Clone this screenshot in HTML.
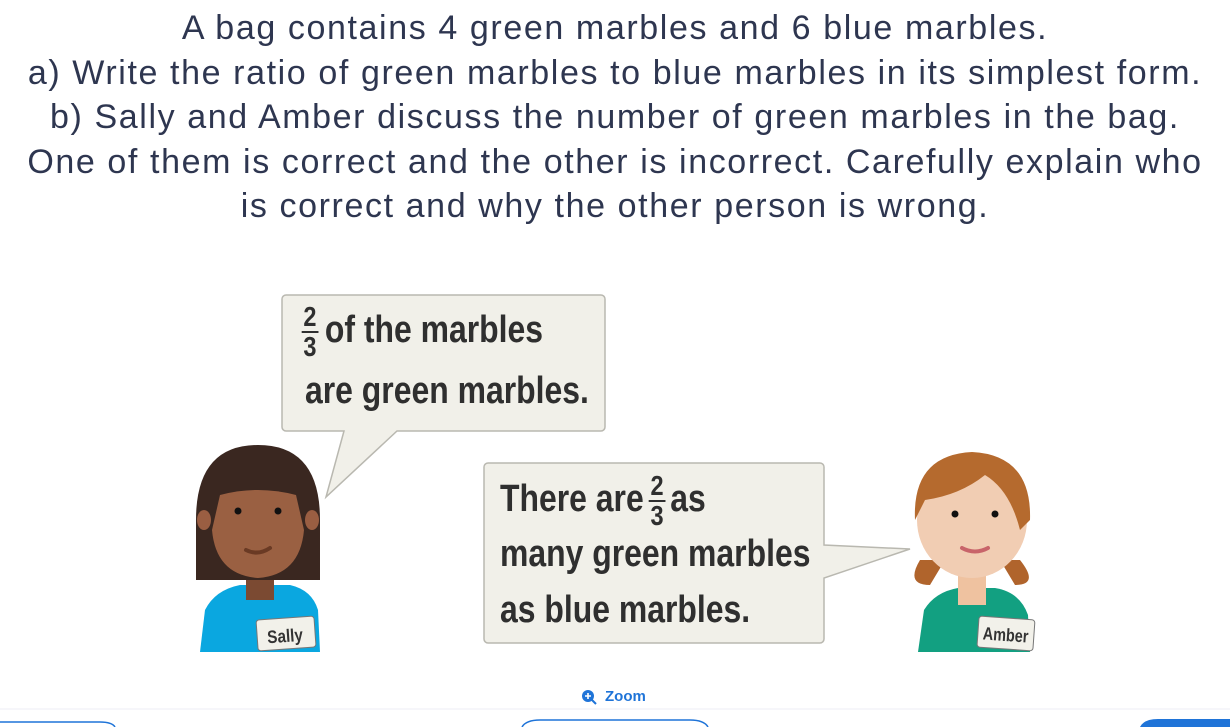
<!DOCTYPE html>
<html><head><meta charset="utf-8"><style>
body{margin:0;width:1230px;height:727px;background:#fff;overflow:hidden;position:relative;font-family:"Liberation Sans",sans-serif}
.q{position:absolute;top:6px;left:0;width:1230px;text-align:center;color:#2e3650;font-size:34px;letter-spacing:1.6px;line-height:44.5px}
.b{position:absolute;font-family:"Liberation Sans",sans-serif;font-weight:bold;color:#2f2f2f;font-size:38px;white-space:nowrap;transform:scaleX(0.84);transform-origin:0 50%}
.fr{display:inline-block;vertical-align:middle;text-align:center;font-size:28px;line-height:28px;margin:0 8px 0 2px}
.fr span{display:block}
.fr .n{border-bottom:2px solid #2f2f2f;padding:0 2px}
</style></head><body>
<div class="q">A bag contains 4 green marbles and 6 blue marbles.<br>a) Write the ratio of green marbles to blue marbles in its simplest form.<br>b) Sally and Amber discuss the number of green marbles in the bag.<br>One of them is correct and the other is incorrect. Carefully explain who<br>is correct and why the other person is wrong.</div>
<svg width="1230" height="727" style="position:absolute;left:0;top:0">
<path d="M286 295H601a4 4 0 0 1 4 4V427a4 4 0 0 1-4 4H397L326 497L344 431H286a4 4 0 0 1-4-4V299a4 4 0 0 1 4-4Z" fill="#f1f0e9" stroke="#b9b8b0" stroke-width="1.5"/>
<path d="M488 463H820a4 4 0 0 1 4 4V545L910 549L824 578V639a4 4 0 0 1-4 4H488a4 4 0 0 1-4-4V467a4 4 0 0 1 4-4Z" fill="#f1f0e9" stroke="#b9b8b0" stroke-width="1.5"/>
<path d="M200 652L205 610Q215 590 240 585H290Q312 590 318 610L320 652Z" fill="#0aa7e0"/>
<rect x="246" y="560" width="28" height="40" fill="#7b4a32"/>
<path d="M196 520Q196 445 258 445Q320 445 320 520V580H196Z" fill="#3a2720"/>
<ellipse cx="204" cy="520" rx="7" ry="10" fill="#9a5e42"/>
<ellipse cx="312" cy="520" rx="7" ry="10" fill="#9a5e42"/>
<path d="M220 495Q258 485 296 495L304 530Q300 575 258 578Q216 575 212 530Z" fill="#9a6042"/>
<circle cx="238" cy="511" r="3.5" fill="#111"/><circle cx="278" cy="511" r="3.5" fill="#111"/>
<path d="M246 550Q258 556 270 548" stroke="#6a3a24" stroke-width="4" fill="none" stroke-linecap="round"/>
<rect x="257" y="618" width="58" height="31" rx="3" fill="#f2f1ea" stroke="#777" transform="rotate(-4 286 633)"/>
<text x="267" y="642" font-family="Liberation Sans,sans-serif" font-weight="bold" font-size="18" fill="#333" transform="rotate(-4 286 633) translate(267 0) scale(0.85 1) translate(-267 0)">Sally</text>
<path d="M918 652L924 610Q935 592 958 588H995Q1020 592 1028 615L1030 652Z" fill="#12a081"/>
<rect x="958" y="570" width="28" height="35" fill="#efc2a0"/>
<path d="M920 560Q905 585 930 585L945 560Z M1020 560Q1040 585 1015 585L1000 560Z" fill="#b0642c"/>
<ellipse cx="972" cy="520" rx="55" ry="58" fill="#f1cdb3"/>
<path d="M915 520Q912 455 972 452Q1032 455 1030 520L1020 530Q1010 490 985 475Q960 495 925 500Z" fill="#b56a2e"/>
<circle cx="955" cy="514" r="3.5" fill="#111"/><circle cx="995" cy="514" r="3.5" fill="#111"/>
<path d="M962 548Q975 555 988 548" stroke="#c8646a" stroke-width="4" fill="none" stroke-linecap="round"/>
<rect x="978" y="618" width="56" height="31" rx="3" fill="#f2f1ea" stroke="#777" transform="rotate(4 1006 633)"/>
<text x="983" y="641" font-family="Liberation Sans,sans-serif" font-weight="bold" font-size="18" fill="#333" transform="rotate(4 1006 633) translate(983 0) scale(0.8 1) translate(-983 0)">Amber</text>
<circle cx="588" cy="696" r="6" fill="#1f74d8"/><path d="M585 696h6M588 693v6" stroke="#fff" stroke-width="1.6"/><path d="M592 700l4 4" stroke="#1f74d8" stroke-width="2"/>
<line x1="0" y1="709" x2="1230" y2="709" stroke="#eeeef5"/>
<path d="M0 722H100Q112 722 115 727" stroke="#1f74d8" fill="none" stroke-width="1.5"/>
<path d="M522 727Q526 720 540 720H690Q704 720 708 727" stroke="#1f74d8" fill="none" stroke-width="1.5"/>
<path d="M1140 727Q1144 719 1158 719H1230V727Z" fill="#1f74d8"/>
</svg>
<div style="position:absolute;left:605px;top:688px;font-size:15px;color:#1f74d8;font-weight:bold">Zoom</div>
<div class="b" style="left:300px;top:303px"><span class="fr"><span class="n">2</span><span>3</span></span>of the marbles</div>
<div class="b" style="left:305px;top:370px">are green marbles.</div>
<div class="b" style="left:500px;top:472px">There are<span class="fr" style="margin:0 6px"><span class="n">2</span><span>3</span></span>as</div>
<div class="b" style="left:500px;top:533px">many green marbles</div>
<div class="b" style="left:500px;top:589px">as blue marbles.</div>
</body></html>
